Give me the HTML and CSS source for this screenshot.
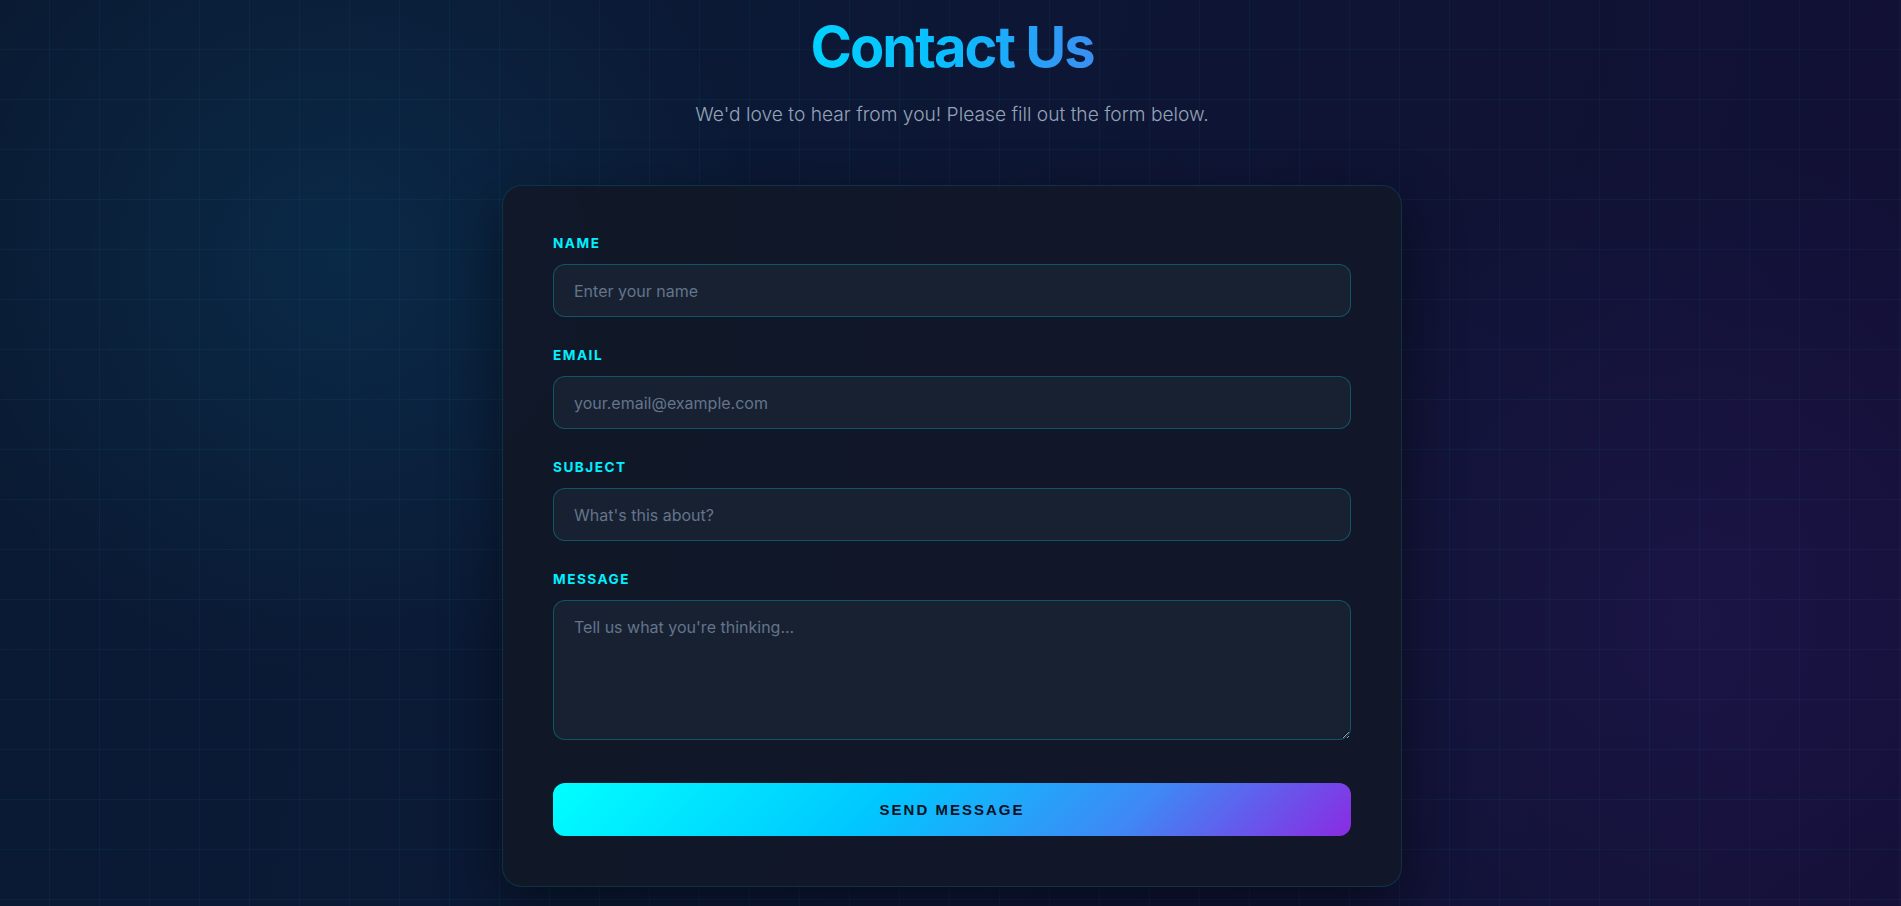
FILE: index.html
```html
<!DOCTYPE html>
<html lang="en">
<head>
<meta charset="utf-8">
<title>Contact Us</title>
<link rel="stylesheet" href="styles.css">
</head>
<body>
<div class="page">
  <header class="hero">
    <h1 class="title">Contact Us</h1>
    <p class="subtitle">We'd love to hear from you! Please fill out the form below.</p>
  </header>
  <form class="card">
    <div class="group">
      <label class="label" for="name">Name</label>
      <input class="field" id="name" type="text" placeholder="Enter your name">
    </div>
    <div class="group">
      <label class="label" for="email">Email</label>
      <input class="field" id="email" type="email" placeholder="your.email@example.com">
    </div>
    <div class="group">
      <label class="label" for="subject">Subject</label>
      <input class="field" id="subject" type="text" placeholder="What's this about?">
    </div>
    <div class="group">
      <label class="label" for="message">Message</label>
      <textarea class="field area" id="message" placeholder="Tell us what you're thinking..."></textarea>
    </div>
    <button class="send" type="button">Send Message</button>
  </form>
</div>
</body>
</html>
```

FILE: styles.css
```css
* { box-sizing: border-box; }

html, body {
  margin: 0;
  padding: 0;
}

body {
  min-height: 100vh;
  padding-left: 3px;
  font-family: Inter, "Noto Sans", sans-serif;
  color: #e2e8f0;
  background-color: #0d1530;
  background-image:
    linear-gradient(rgba(0, 240, 255, 0.045) 1px, transparent 1px),
    linear-gradient(90deg, rgba(0, 240, 255, 0.045) 1px, transparent 1px),
    radial-gradient(circle at 340px 260px, rgba(0, 200, 255, 0.09) 0, rgba(0, 200, 255, 0) 420px),
    radial-gradient(circle at 1700px 620px, rgba(124, 58, 237, 0.085) 0, rgba(124, 58, 237, 0) 480px),
    linear-gradient(100deg, #0a1a33 0%, #0b1935 35%, #0f1434 65%, #120f35 100%);
  background-size: 50px 50px, 50px 50px, 100% 100%, 100% 100%, 100% 100%;
  background-position: -1px -1px, -1px -1px, 0 0, 0 0, 0 0;
}

.page {
  width: 900px;
  margin: 0 auto;
  padding: 13px 0 0;
}

.hero {
  text-align: center;
}

.title {
  display: inline-block;
  margin: 0;
  font-size: 56px;
  font-weight: 700;
  line-height: 68px;
  letter-spacing: -2px;
  background: linear-gradient(90deg, #00d2ff 0%, #0bbcff 50%, #3a8ff2 100%);
  -webkit-background-clip: text;
  background-clip: text;
  color: transparent;
}

.subtitle {
  margin: 22px 0 60px;
  font-size: 19.2px;
  font-weight: 300;
  line-height: 22px;
  color: #94a3b8;
}

.card {
  display: flex;
  flex-direction: column;
  padding: 49px 50px 50px;
  border: 1px solid rgba(0, 240, 255, 0.13);
  border-radius: 20px;
  background: rgba(17, 24, 39, 0.92);
  box-shadow: 0 20px 60px rgba(0, 0, 0, 0.45);
}

.group {
  display: flex;
  flex-direction: column;
  margin-bottom: 30px;
}

.label {
  display: block;
  margin-bottom: 12px;
  font-size: 13.6px;
  font-weight: 700;
  line-height: 17px;
  letter-spacing: 1.5px;
  text-transform: uppercase;
  color: #00f0ff;
}

.field {
  width: 100%;
  height: 53px;
  padding: 0 20px;
  border: 1px solid rgba(0, 240, 255, 0.25);
  border-radius: 12px;
  background: rgba(30, 41, 59, 0.55);
  font-family: Inter, "Noto Sans", sans-serif;
  font-size: 16px;
  color: #e2e8f0;
  outline: none;
}

.field::placeholder {
  color: #64748b;
}

.area {
  display: block;
  height: 140px;
  padding: 15px 20px;
  line-height: 22px;
  resize: vertical;
}

.send {
  height: 53px;
  margin-top: 13px;
  border: none;
  border-radius: 12px;
  background: linear-gradient(135deg, #00ffff 0%, #00c8ff 40%, #3f88f5 72%, #8a2be2 100%);
  font-family: "Liberation Sans", Arial, sans-serif;
  font-size: 15px;
  font-weight: 700;
  letter-spacing: 2px;
  text-transform: uppercase;
  color: #0a1124;
  cursor: pointer;
}
```
